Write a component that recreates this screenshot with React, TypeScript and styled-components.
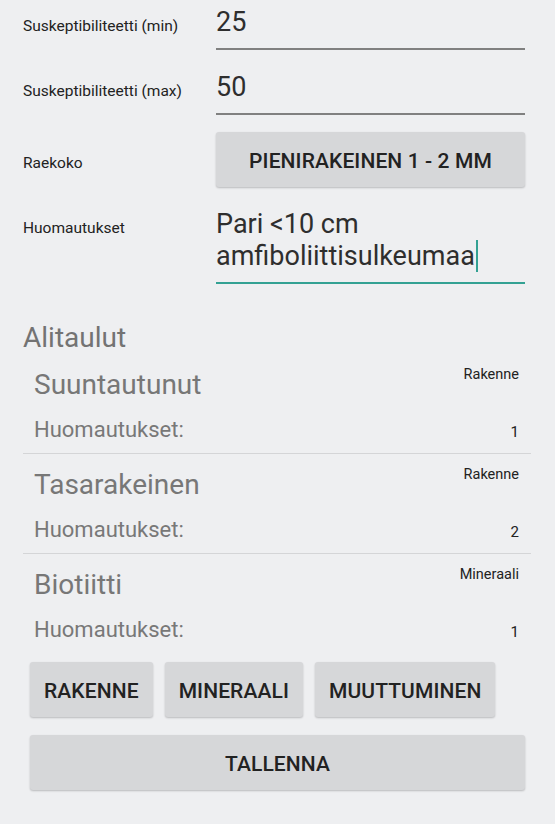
import React from "react";
import styled, { createGlobalStyle } from "styled-components";

const GlobalStyle = createGlobalStyle`
  html, body {
    margin: 0;
    padding: 0;
    background: #eeeff1;
    font-family: Roboto, "Noto Sans", "Liberation Sans", sans-serif;
  }
  * { box-sizing: border-box; }
`;

const Page = styled.div`
  display: flex;
  flex-direction: column;
  padding: 2px 24px 34px 23px;
`;

const Form = styled.div`
  display: flex;
  flex-direction: column;
  gap: 17px;
  padding-right: 6px;
`;

const FormRow = styled.div`
  display: flex;
  align-items: baseline;
`;

const Label = styled.div`
  width: 193px;
  flex: none;
  font-size: 15.5px;
  line-height: 18px;
  color: #222;
`;

const Field = styled.div<{ $focused?: boolean }>`
  flex: 1;
  font-size: 27px;
  line-height: 32px;
  padding: 4px 0 10px;
  color: #2e2e2e;
  border-bottom: 2px solid ${(p) => (p.$focused ? "#33a193" : "#808080")};
`;

const Caret = styled.span`
  display: inline-block;
  width: 2px;
  height: 32px;
  margin-left: 1px;
  background: #33a193;
  vertical-align: top;
`;

const Raised = styled.button<{ $wide?: boolean }>`
  font-family: Roboto, "Noto Sans", "Liberation Sans", sans-serif;
  font-size: 21px;
  font-weight: 500;
  letter-spacing: 0.1px;
  text-transform: uppercase;
  color: #222;
  background: #d6d7d9;
  border: none;
  border-radius: 3px;
  box-shadow: 0 1px 2px rgba(0, 0, 0, 0.22);
  height: 55px;
  padding: 2px 14px 0;
  flex: ${(p) => (p.$wide ? "1" : "none")};
  cursor: pointer;
`;

const SectionTitle = styled.div`
  margin-top: 37px;
  font-size: 28px;
  line-height: 33px;
  color: #737373;
`;

const Item = styled.div<{ $last?: boolean }>`
  display: flex;
  flex-direction: column;
  padding: 0 12px 0 11px;
  border-bottom: 1px solid ${(p) => (p.$last ? "transparent" : "#d4d5d7")};
`;

const ItemTop = styled.div`
  display: flex;
  justify-content: space-between;
  align-items: flex-start;
`;

const ItemTitle = styled.div`
  margin-top: 14px;
  font-size: 28px;
  line-height: 33px;
  color: #777;
`;

const ItemTag = styled.div`
  margin-top: 12px;
  font-size: 14.5px;
  line-height: 17px;
  color: #222;
`;

const ItemBottom = styled.div`
  display: flex;
  justify-content: space-between;
  align-items: baseline;
  margin-top: 15px;
  padding-bottom: 10px;
`;

const Note = styled.div`
  font-size: 22px;
  line-height: 27px;
  color: #787878;
`;

const Count = styled.div`
  font-size: 15px;
  color: #222;
`;

const ButtonRow = styled.div`
  display: flex;
  gap: 12px;
  margin: 8px 0 0 7px;
`;

const SaveRow = styled.div`
  display: flex;
  margin: 18px 6px 0 7px;
`;

const items = [
  { title: "Suuntautunut", tag: "Rakenne", count: 1 },
  { title: "Tasarakeinen", tag: "Rakenne", count: 2 },
  { title: "Biotiitti", tag: "Mineraali", count: 1 },
];

export default function App() {
  return (
    <>
      <GlobalStyle />
      <Page>
        <Form>
          <FormRow>
            <Label>Suskeptibiliteetti (min)</Label>
            <Field>25</Field>
          </FormRow>
          <FormRow>
            <Label>Suskeptibiliteetti (max)</Label>
            <Field>50</Field>
          </FormRow>
          <FormRow>
            <Label>Raekoko</Label>
            <Raised $wide>Pienirakeinen 1 - 2 mm</Raised>
          </FormRow>
          <FormRow>
            <Label>Huomautukset</Label>
            <Field $focused>
              Pari &lt;10 cm amfiboliittisulkeumaa
              <Caret />
            </Field>
          </FormRow>
        </Form>
        <SectionTitle>Alitaulut</SectionTitle>
        {items.map((it, i) => (
          <Item key={i} $last={i === items.length - 1}>
            <ItemTop>
              <ItemTitle>{it.title}</ItemTitle>
              <ItemTag>{it.tag}</ItemTag>
            </ItemTop>
            <ItemBottom>
              <Note>Huomautukset:</Note>
              <Count>{it.count}</Count>
            </ItemBottom>
          </Item>
        ))}
        <ButtonRow>
          <Raised>Rakenne</Raised>
          <Raised>Mineraali</Raised>
          <Raised>Muuttuminen</Raised>
        </ButtonRow>
        <SaveRow>
          <Raised $wide>Tallenna</Raised>
        </SaveRow>
      </Page>
    </>
  );
}
